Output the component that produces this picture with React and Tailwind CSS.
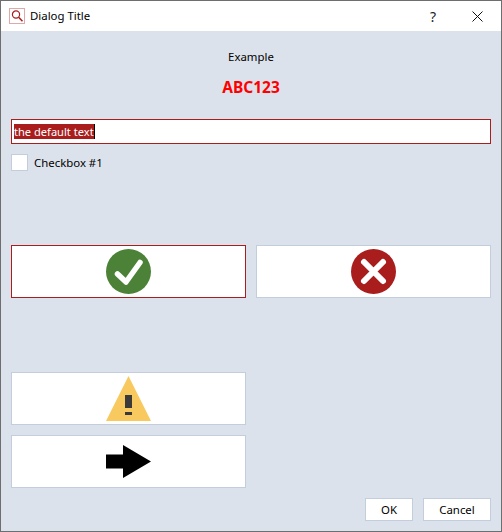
import React from "react";

const font = { fontFamily: '"Noto Sans", sans-serif' };

function CheckIcon() {
  return (
    <svg width="45" height="45" viewBox="0 0 45 45">
      <circle cx="22.5" cy="22.5" r="22.5" fill="#4b8237" />
      <path d="M11.5 25 L20 33 L34 13.5" fill="none" stroke="#fff" strokeWidth="5.5" strokeLinecap="round" strokeLinejoin="round" />
    </svg>
  );
}

function CrossIcon() {
  return (
    <svg width="45" height="45" viewBox="0 0 45 45">
      <circle cx="22.5" cy="22.5" r="22.5" fill="#a91d1d" />
      <path d="M13 13 L32 32 M32 13 L13 32" fill="none" stroke="#fff" strokeWidth="6" strokeLinecap="round" />
    </svg>
  );
}

function WarningIcon() {
  return (
    <svg width="45" height="45" viewBox="0 0 45 45">
      <path d="M22.5 0 L45 45 L0 45 Z" fill="#f8c95f" />
      <rect x="19" y="19" width="7" height="13" fill="#3a3a3a" />
      <rect x="19" y="36" width="7" height="3" fill="#3a3a3a" />
    </svg>
  );
}

function ArrowIcon() {
  return (
    <svg width="45" height="33" viewBox="0 0 45 33">
      <path d="M0 9.5 L17 9.5 L17 0 L45 16.5 L17 33 L17 23.5 L0 23.5 Z" fill="#000" />
    </svg>
  );
}

function IconButton({ children, active }) {
  return (
    <button className={`flex h-[53px] items-center justify-center border bg-white ${active ? "border-[#a91d1d]" : "border-[#c3cedd]"}`}>
      {children}
    </button>
  );
}

function TitleBar() {
  return (
    <div className="flex h-[30px] items-center bg-white">
      <div className="ml-[8px] flex h-[16px] w-[16px] items-center justify-center border border-[#e0a8a8]">
        <svg width="14" height="14" viewBox="0 0 14 14" fill="none" stroke="#a91d1d" strokeWidth="1.2">
          <circle cx="6" cy="5.5" r="3.6" />
          <path d="M8.6 8.2 L12.5 12.3" strokeWidth="1.5" />
        </svg>
      </div>
      <span className="ml-[5px] text-[11.4px] text-black">Dialog Title</span>
      <span className="ml-auto mr-[36px] text-[14px] text-[#222]">?</span>
      <svg className="mr-[18px]" width="11" height="11" viewBox="0 0 11 11" fill="none" stroke="#111" strokeWidth="1">
        <path d="M0.5 0.5 L10.5 10.5 M10.5 0.5 L0.5 10.5" />
      </svg>
    </div>
  );
}

export default function App() {
  return (
    <div className="flex h-[532px] w-[502px] flex-col border border-[#6e6e6e] bg-[#dce2ec] text-[11.4px] text-black" style={font}>
      <TitleBar />

      <div className="flex flex-1 flex-col px-[10px]">
        {/* Header */}
        <div className="mt-[17px] text-center leading-[18px]">Example</div>
        <div className="mt-[11px] text-center text-[15.5px] font-bold leading-[20px] text-[#ff0000]">ABC123</div>

        {/* Input */}
        <div className="mt-[22px] flex h-[25px] items-center border border-[#a91d1d] bg-white pl-[2px]">
          <span className="flex h-[15px] items-center bg-[#a91d1d] text-[11.1px] leading-none text-white">the default text</span>
          <span className="h-[15px] w-px bg-black" />
        </div>

        {/* Checkbox */}
        <label className="mt-[10px] flex h-[17px] items-center gap-[6px]">
          <span className="h-[17px] w-[17px] border border-[#c3cedd] bg-white" />
          <span>Checkbox #1</span>
        </label>

        <div className="mt-[74px] grid grid-cols-2 gap-[10px]">
          <IconButton active><CheckIcon /></IconButton>
          <IconButton><CrossIcon /></IconButton>
        </div>

        <div className="mt-[74px] grid grid-cols-2 gap-[10px]">
          <IconButton><WarningIcon /></IconButton>
        </div>
        <div className="mt-[10px] grid grid-cols-2 gap-[10px]">
          <IconButton><ArrowIcon /></IconButton>
        </div>

        {/* Footer */}
        <div className="mt-[10px] flex justify-end gap-[10px]">
          <button className="h-[23px] w-[48px] border border-[#c3cedd] bg-white">OK</button>
          <button className="h-[23px] w-[68px] border border-[#c3cedd] bg-white">Cancel</button>
        </div>
      </div>
    </div>
  );
}
